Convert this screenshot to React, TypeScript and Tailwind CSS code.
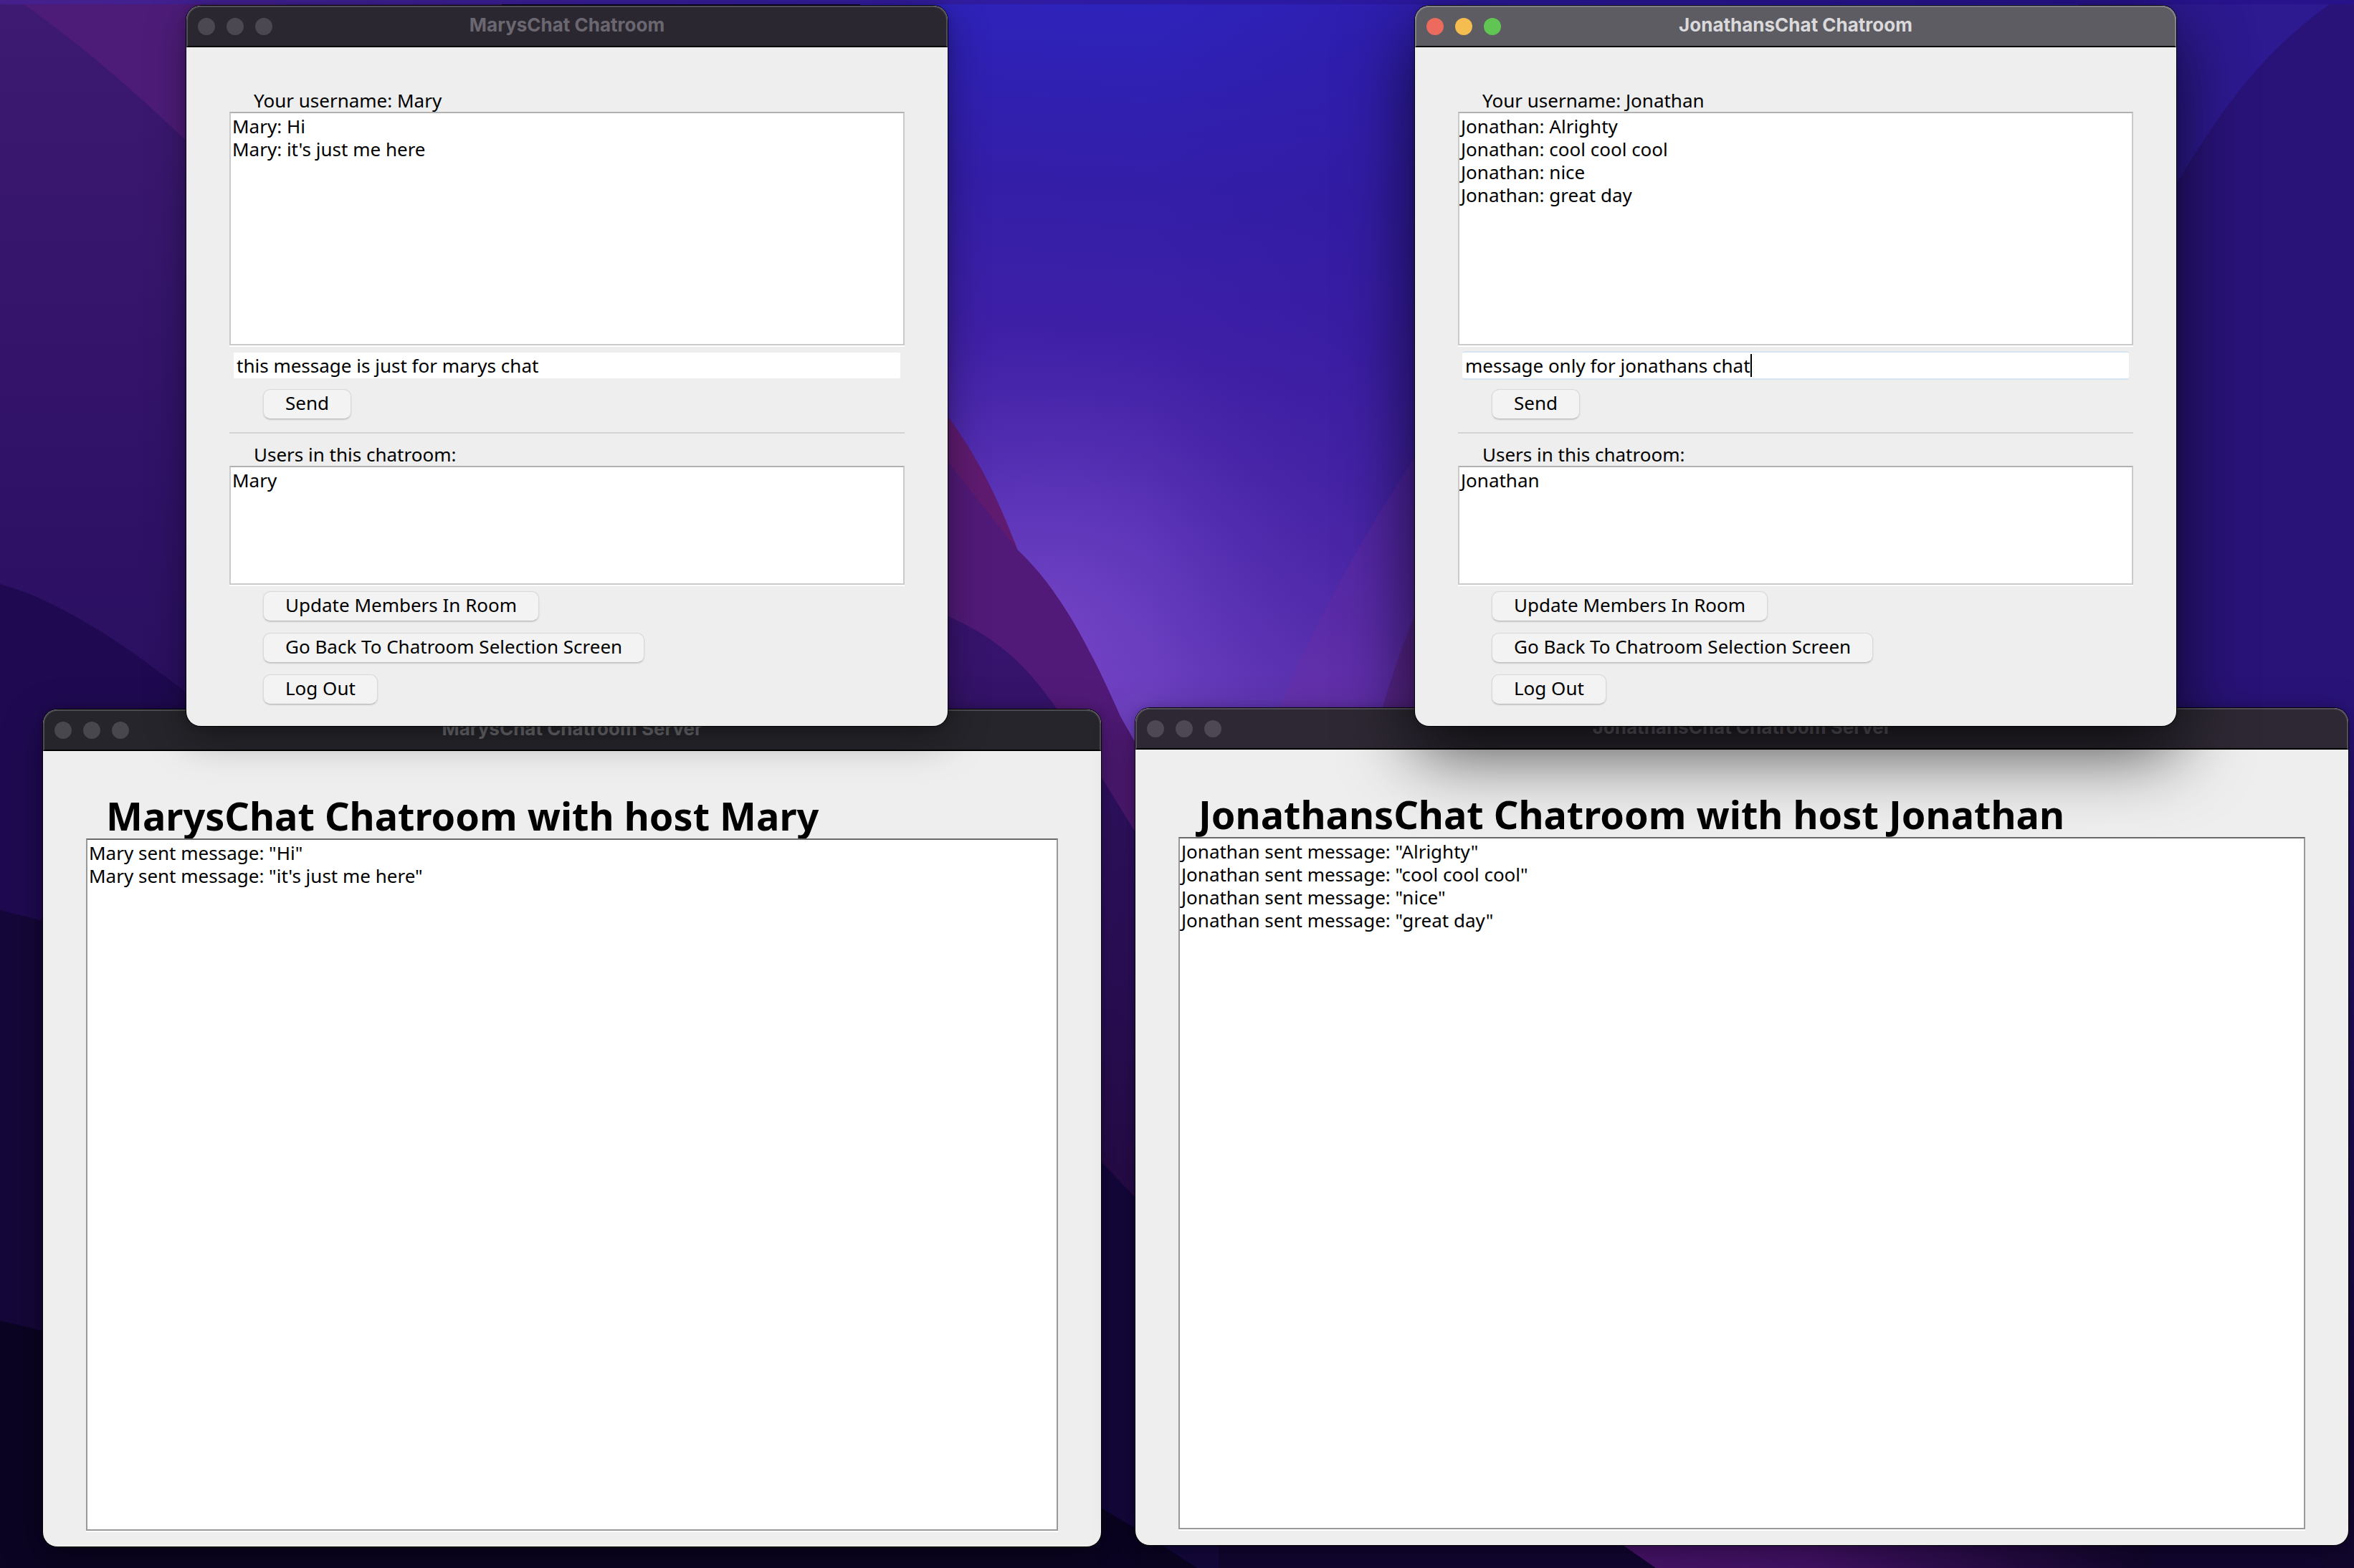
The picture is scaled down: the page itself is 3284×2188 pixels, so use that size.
import { useId, useState } from "react";
import type { ReactNode } from "react";

type WindowProps = {
  title: string;
  place: string;
  bar: string;
  titleColor: string;
  lights: [string, string, string];
  shadow: string;
  children: ReactNode;
};

const inactiveShadow =
  "shadow-[0_0_0_1px_rgba(0,0,0,0.9),0_0_12px_rgba(0,0,0,0.2),0_16px_56px_rgba(0,0,0,0.36)]";
const activeShadow =
  "shadow-[0_0_0_1px_rgba(0,0,0,0.9),0_0_8px_rgba(0,0,0,0.15),0_36px_100px_rgba(0,0,0,0.7)]";

function DesktopWindow({ title, place, bar, titleColor, lights, shadow, children }: WindowProps) {
  return (
    <section className={`absolute flex flex-col rounded-[20px] bg-[#eeeeee] ${place} ${shadow}`}>
      <header
        className={`grid h-[58px] grid-cols-[1fr_auto_1fr] items-center rounded-t-[20px] border-2 border-b-black px-[14px] ${bar}`}
      >
        <div className="flex gap-4">
          {["Close", "Minimize", "Zoom"].map((name, i) => (
            <button key={name} type="button" aria-label={name} className={`size-6 rounded-full ${lights[i]}`} />
          ))}
        </div>
        <h2 className={`pb-1 font-[Inter,sans-serif] text-[26px] leading-8 font-bold ${titleColor}`}>{title}</h2>
      </header>
      {children}
    </section>
  );
}

type LogProps = { id: string; lines: string[]; tone: string; height: string; label?: string };

function Log({ id, lines, tone, height, label }: LogProps) {
  return (
    <textarea
      id={id}
      aria-label={label}
      readOnly
      value={lines.join("\n")}
      className={`block w-full resize-none overflow-hidden border-2 bg-white px-[2px] pt-[2px] leading-8 shadow-[0_2px_0_#ffffff] outline-none ${tone} ${height}`}
    />
  );
}

function PushButton({ children }: { children: ReactNode }) {
  return (
    <button
      type="button"
      className="h-[42px] rounded-[10px] border border-[#d9d9d9] border-b-[#bdbdbd] bg-[#f3f3f3] px-[30px] pb-1 leading-8 shadow-[0_1px_2px_rgba(0,0,0,0.14)]"
    >
      {children}
    </button>
  );
}

const softTone = "border-[#cacaca] border-t-[#b1b1b1]";
const hardTone = "border-[#999999] border-t-[#6a6a6a]";

type ChatProps = { user: string; messages: string[]; draft: string; focused?: boolean };

function ChatBody({ user, messages, draft, focused = false }: ChatProps) {
  const id = useId();
  const [text, setText] = useState(draft);
  return (
    <div className="flex flex-col px-[60px] pt-[58px] pb-[30px]">
      <label htmlFor={`${id}-log`} className="pl-[34px] leading-8">
        Your username: {user}
      </label>
      <Log id={`${id}-log`} lines={messages} tone={softTone} height="h-[326px]" />
      <div
        className={`mx-[6px] mt-2 flex h-10 items-center rounded-[3px] border-y-2 px-1 ${
          focused ? "border-[#d5e4f0] bg-white" : "border-transparent bg-white bg-clip-padding"
        }`}
      >
        <input
          aria-label="Message"
          value={text}
          onChange={(e) => setText(e.target.value)}
          className={`h-9 bg-transparent leading-8 outline-none ${focused ? "field-sizing-content" : "w-full"}`}
        />
        {focused && <span className="h-8 w-[2px] bg-black" />}
      </div>
      <div className="mt-[13px] pl-[47px]">
        <PushButton>Send</PushButton>
      </div>
      <hr className="mt-[18px] border-t-2 border-[#d4d4d4]" />
      <label htmlFor={`${id}-users`} className="mt-[13px] pl-[34px] leading-8">
        Users in this chatroom:
      </label>
      <Log id={`${id}-users`} lines={[user]} tone={softTone} height="h-[166px]" />
      <div className="mt-[9px] flex flex-col items-start gap-4 pl-[47px]">
        <PushButton>Update Members In Room</PushButton>
        <PushButton>Go Back To Chatroom Selection Screen</PushButton>
        <PushButton>Log Out</PushButton>
      </div>
    </div>
  );
}

function ServerBody({ heading, lines }: { heading: string; lines: string[] }) {
  const id = useId();
  return (
    <div className="flex flex-col px-[60px] pt-[58px] pb-[22px]">
      <h1 className="pl-7 text-[54px] leading-[64px] font-bold whitespace-nowrap">{heading}</h1>
      <Log id={id} label={heading} lines={lines} tone={hardTone} height="h-[966px]" />
    </div>
  );
}

function Wallpaper() {
  return (
    <svg
      className="absolute inset-0 h-full w-full"
      viewBox="0 0 3284 2188"
      preserveAspectRatio="none"
      aria-hidden="true"
    >
      <defs>
        <linearGradient id="sky" gradientUnits="userSpaceOnUse" x1="1500" y1="0" x2="1440" y2="1000">
          <stop offset="0" stopColor="#2d22ba" />
          <stop offset="0.25" stopColor="#331ea8" />
          <stop offset="0.45" stopColor="#3d1fa6" />
          <stop offset="0.65" stopColor="#4d27a8" />
          <stop offset="0.82" stopColor="#5e32b0" />
          <stop offset="1" stopColor="#7440ba" />
        </linearGradient>
        <radialGradient id="glow" gradientUnits="userSpaceOnUse" cx="1460" cy="880" r="420">
          <stop offset="0" stopColor="#7a4acc" stopOpacity="0.7" />
          <stop offset="0.5" stopColor="#6640c8" stopOpacity="0.4" />
          <stop offset="1" stopColor="#5030b8" stopOpacity="0" />
        </radialGradient>
        <linearGradient id="dusk" x1="0" y1="0" x2="1" y2="0">
          <stop offset="0" stopColor="#30189c" stopOpacity="0" />
          <stop offset="1" stopColor="#30189c" stopOpacity="0.5" />
        </linearGradient>
        <linearGradient id="left" x1="0" y1="0" x2="0" y2="1">
          <stop offset="0" stopColor="#3e1a72" />
          <stop offset="0.6" stopColor="#301268" />
          <stop offset="1" stopColor="#280e5c" />
        </linearGradient>
        <linearGradient id="ridge" gradientUnits="userSpaceOnUse" x1="0" y1="860" x2="0" y2="1680">
          <stop offset="0" stopColor="#37146e" />
          <stop offset="0.6" stopColor="#2f1060" />
          <stop offset="1" stopColor="#290c4c" />
        </linearGradient>
        <linearGradient id="magenta" x1="0" y1="0" x2="1" y2="0">
          <stop offset="0" stopColor="#4d1470" />
          <stop offset="0.4" stopColor="#45126a" />
          <stop offset="1" stopColor="#12062e" />
        </linearGradient>
        <linearGradient id="edge" x1="0" y1="0" x2="0" y2="1">
          <stop offset="0" stopColor="#291379" />
          <stop offset="1" stopColor="#12062e" />
        </linearGradient>
      </defs>
      <rect width="3284" height="2188" fill="#120633" />
      <rect x="1200" width="2084" height="1100" fill="url(#sky)" />
      <rect x="1200" y="400" width="800" height="700" fill="url(#glow)" />
      <rect x="1600" width="450" height="1100" fill="url(#dusk)" />
      <path d="M2000 600C1930 700 1840 850 1780 1000H2000Z" fill="#7a2c9c" opacity="0.22" />
      <path d="M2000 800C1970 860 1945 930 1925 1000H2000Z" fill="#551c68" opacity="0.45" />
      <rect x="2900" width="384" height="1000" fill="#2d1990" />
      <path d="M2960 340L3040 250C3090 172 3140 85 3250 6H3284V1000H2960Z" fill="#291379" />
      <rect x="3240" y="1000" width="44" height="1188" fill="url(#edge)" />

      <path d="M1250 500L1323 582C1365 640 1390 690 1420 768C1470 815 1510 880 1563 1000L1700 1240V2188H1250Z" fill="#5f1b70" />
      <path d="M1250 590L1323 645L1420 768C1470 815 1510 880 1563 1000L1700 1240V2188H1250Z" fill="#511a78" />
      <path d="M1200 830L1323 860C1390 890 1430 925 1475 990L1537 1085L1583 1160L1700 1340V2188H1200Z" fill="url(#ridge)" />
      <path d="M1450 1560L1537 1622L1583 1670L1700 1760V2188H1450Z" fill="#150840" />

      <rect width="700" height="1100" fill="url(#left)" />
      <path d="M25 0C110 60 180 120 258 195L400 330V0Z" fill="#4d1c78" />
      <path d="M0 815C90 840 180 905 258 965L400 1100H700V2188H0Z" fill="#1f0a52" />
      <path d="M0 1270L60 1285L300 1340V2188H0Z" fill="#150739" />
      <path d="M0 1843L60 1857L1200 2110L1537 2105L1583 2132L1670 2188H0Z" fill="#0b0423" />
      <path d="M2200 2110L2264 2156L2310 2188H3000V2110Z" fill="url(#magenta)" />
    </svg>
  );
}

export default function App() {
  return (
    <main className="relative min-h-screen overflow-hidden bg-[#120633] font-['Noto_Sans',sans-serif] text-[26px] text-black">
      <Wallpaper />
      <div className="relative h-[6px] bg-gradient-to-r from-[#45208c] via-[#2c1aa4] to-[#27128a]" />

      <DesktopWindow
        title="MarysChat Chatroom Server"
        place="left-[60px] top-[990px] w-[1476px]"
        bar="border-[#4c4b50] bg-[#26252b]"
        titleColor="text-[#66656a]"
        lights={["bg-[#48474d]", "bg-[#48474d]", "bg-[#48474d]"]}
        shadow={inactiveShadow}
      >
        <ServerBody
          heading="MarysChat Chatroom with host Mary"
          lines={['Mary sent message: "Hi"', 'Mary sent message: "it\'s just me here"']}
        />
      </DesktopWindow>

      <DesktopWindow
        title="JonathansChat Chatroom Server"
        place="left-[1584px] top-[988px] w-[1692px]"
        bar="border-[#524e57] bg-[#2d2833]"
        titleColor="text-[#6b6771]"
        lights={["bg-[#4d4853]", "bg-[#4d4853]", "bg-[#4d4853]"]}
        shadow={inactiveShadow}
      >
        <ServerBody
          heading="JonathansChat Chatroom with host Jonathan"
          lines={[
            'Jonathan sent message: "Alrighty"',
            'Jonathan sent message: "cool cool cool"',
            'Jonathan sent message: "nice"',
            'Jonathan sent message: "great day"',
          ]}
        />
      </DesktopWindow>

      <DesktopWindow
        title="MarysChat Chatroom"
        place="left-[260px] top-[8px] w-[1062px]"
        bar="border-[#514e56] bg-[#2b2731]"
        titleColor="text-[#6b6771]"
        lights={["bg-[#4c4852]", "bg-[#4c4852]", "bg-[#4c4852]"]}
        shadow={inactiveShadow}
      >
        <ChatBody
          user="Mary"
          messages={["Mary: Hi", "Mary: it's just me here"]}
          draft="this message is just for marys chat"
        />
      </DesktopWindow>

      <DesktopWindow
        title="JonathansChat Chatroom"
        place="left-[1974px] top-[8px] w-[1062px]"
        bar="border-[#818085] bg-[#5d5c62]"
        titleColor="text-[#dad9dc]"
        lights={["bg-[#ed6a5e]", "bg-[#f5bd4f]", "bg-[#61c554]"]}
        shadow={activeShadow}
      >
        <ChatBody
          user="Jonathan"
          messages={["Jonathan: Alrighty", "Jonathan: cool cool cool", "Jonathan: nice", "Jonathan: great day"]}
          draft="message only for jonathans chat"
          focused
        />
      </DesktopWindow>
    </main>
  );
}
